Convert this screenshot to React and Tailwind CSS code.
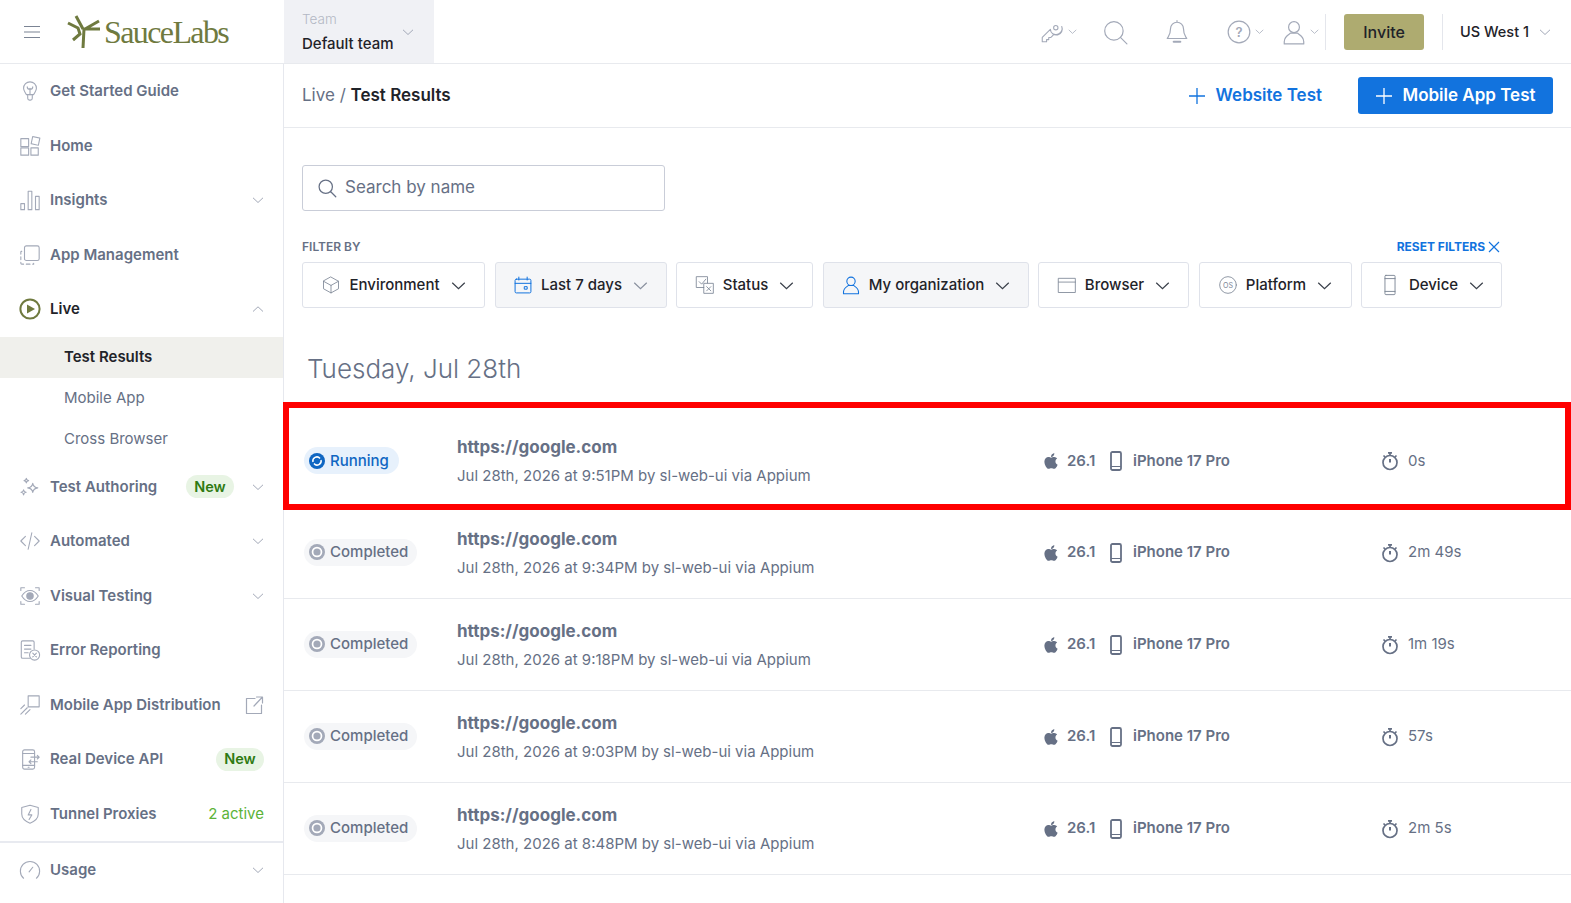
import React from "react";
import { FaApple } from "react-icons/fa";

const I = ({ s = 22, c = "#a3a9b8", sw = 1.2, vb = 24, children, cls = "" }) => (
  <svg width={s} height={s} viewBox={`0 0 ${vb} ${vb}`} fill="none" stroke={c} strokeWidth={sw} strokeLinecap="round" strokeLinejoin="round" className={`shrink-0 ${cls}`}>{children}</svg>
);
const Chev = ({ up, s = 12, c = "#a3a9b8", sw = 1 }) => (
  <svg width={s} height={s} viewBox="0 0 12 12" fill="none" stroke={c} strokeWidth={sw} className="shrink-0"><path d={up ? "M1 8.5 6 3.8l5 4.7" : "M1 3.8 6 8.5l5-4.7"} /></svg>
);
const icons = {
  bulb: <><path d="M12 2a7 7 0 0 0-7 7c0 3 2 4.500 3 7h8c1-2.500 3-4 3-7a7 7 0 0 0-7-7Z"/><path d="M9.500 16v4a2 2 0 0 0 2 2h1a2 2 0 0 0 2-2v-4M12 16V9M9 7.500c0 2 1 2.500 3 2.500s3-.5 3-2.500"/></>,
  home: <><rect x="2" y="4" width="8.500" height="8.500"/><rect x="2" y="14" width="8.500" height="8"/><rect x="13" y="14" width="8" height="8"/><rect x="14" y="2.500" width="8" height="8" transform="rotate(12 18 6.500)"/></>,
  bars: <><rect x="2" y="16" width="4" height="6.500"/><rect x="10" y="2.500" width="4" height="20"/><rect x="18" y="8" width="4" height="14.500"/></>,
  app: <><rect x="6" y="2" width="16" height="16" rx="2"/><path d="M3 8h-.5A1 1 0 0 0 2 9v2m0 3v3m0 3v1a1 1 0 0 0 1 1h2m3 0h4m3 0h1v-1" strokeDasharray="none"/></>,
  spark: <><path d="M15 8c.5 3 2 4.500 5.500 5-3.500.5-5 2-5.500 5-.5-3-2-4.500-5.500-5 3.500-.5 5-2 5.500-5Z"/><path d="M8 2.500c.2 1.500 1 2.300 2.500 2.500C9 5.200 8.200 6 8 7.500 7.800 6 7 5.200 5.500 5 7 4.800 7.800 4 8 2.500ZM5 15c.2 1.800 1 2.600 2.800 2.800C6 18 5.200 18.800 5 20.600 4.800 18.800 4 18 2.200 17.800 4 17.600 4.800 16.800 5 15Z"/></>,
  code: <><path d="M7 7 2 12l5 5M17 7l5 5-5 5M14 3l-4 18"/></>,
  eye: <><path d="M2 6V3h4M18 3h4v3M22 18v3h-4M6 21H2v-3"/><path d="M3 12c2.500-4 5.500-6 9-6s6.500 2 9 6c-2.500 4-5.500 6-9 6s-6.500-2-9-6Z"/><circle cx="12" cy="12" r="3.500" fill="#a3a9b8"/></>,
  err: <><path d="M12 21H4a1.500 1.500 0 0 1-1.500-1.500v-16A1.500 1.500 0 0 1 4 2h11a1.500 1.500 0 0 1 1.500 1.500V11"/><path d="M6 7h7M6 11h7M6 15h4"/><circle cx="17" cy="17.500" r="5.500"/><path d="m15 15.500 4 4m0-4-4 4"/></>,
  dist: <><rect x="10" y="2" width="12" height="12"/><path d="m2 22 7-7M7 22l5-5M2 16l4-4"/></>,
  api: <><rect x="4" y="2" width="13" height="21" rx="2"/><path d="M4 6h13M4 19h13M10 21h1M13 10h9m-2-2 2 2-2 2M20 15h-9m2-2-2 2 2 2"/></>,
  shield: <><path d="M12 2.500 21 5v7c0 5-4 8-9 10-5-2-9-5-9-10V5l9-2.500Z"/><path d="m13 7-3 6h4l-3 5" /></>,
  gauge: <><path d="M5 21a10.500 10.500 0 1 1 14 0"/><path d="m11 14 4-5"/></>,
};

const Row = ({ icon, label, chev, extra, live }) => (
  <div className="h-[54.5px] flex items-center pl-[19px] pr-[19px]">
    {live ? (
      <svg width="22" height="22" viewBox="0 0 22 22" className="shrink-0"><circle cx="11" cy="11" r="9.600" fill="none" stroke="#6f7a3f" strokeWidth="2"/><path d="M8 6.500 16 11l-8 4.500Z" fill="#6f7a3f"/></svg>
    ) : <I c="#a3a9b8">{icons[icon]}</I>}
    <span className={`ml-[9px] text-[15px] font-semibold ${live ? "text-[#1f2329]" : "text-[#667085]"}`}>{label}</span>
    <span className="flex-1" />
    {extra}
    {chev && <span className="ml-[18px]"><Chev up={chev === "up"} /></span>}
  </div>
);
const New = () => <span className="h-[23px] w-[48px] flex items-center justify-center rounded-full bg-[#e8f4e4] text-[#2f7a12] text-[14.500px] font-semibold">New</span>;
const Sub = ({ label, active }) => (
  <div className={`h-[41px] flex items-center pl-[64px] text-[15px] ${active ? "bg-[#f0f0ec] text-[#1f2329] font-semibold" : "text-[#667085]"}`}>{label}</div>
);

const Sidebar = () => (
  <aside className="w-[284px] shrink-0 border-r border-[#e6e8ee] h-full overflow-hidden">
    <Row icon="bulb" label="Get Started Guide" />
    <Row icon="home" label="Home" />
    <Row icon="bars" label="Insights" chev="down" />
    <Row icon="app" label="App Management" />
    <Row live label="Live" chev="up" />
    <Sub label="Test Results" active />
    <Sub label="Mobile App" />
    <Sub label="Cross Browser" />
    <Row icon="spark" label="Test Authoring" chev="down" extra={<New />} />
    <Row icon="code" label="Automated" chev="down" />
    <Row icon="eye" label="Visual Testing" chev="down" />
    <Row icon="err" label="Error Reporting" />
    <Row icon="dist" label="Mobile App Distribution" extra={
      <I s={20} sw={1.200} vb={20}><path d="M11 3.500H2.500v15h15V10M10 11 18 2.500M12.500 2h6v6"/></I>
    } />
    <Row icon="api" label="Real Device API" extra={<New />} />
    <Row icon="shield" label="Tunnel Proxies" extra={<span className="text-[15px] text-[#5cb338]">2 active</span>} />
    <div className="border-t-2 border-[#e8eaf0] h-[56px] flex items-center pl-[19px] pr-[19px]">
      <I>{icons.gauge}</I>
      <span className="ml-[9px] text-[15px] font-semibold text-[#667085]">Usage</span>
      <span className="flex-1" />
      <Chev />
    </div>
  </aside>
);

const TopBar = () => (
  <header className="h-[64px] border-b border-[#e8eaee] flex items-center shrink-0">
    <div className="w-[284px] flex items-center pl-[23px] shrink-0">
      <svg width="18" height="14" viewBox="0 0 18 14" stroke="#7b8494" strokeWidth="1.200" className="shrink-0"><path d="M1 1.500h16M1 7h16M1 12.500h16"/></svg>
      <svg width="36" height="36" viewBox="0 0 36 36" fill="none" stroke="#6f7a3f" strokeWidth="3" className="ml-[25px] shrink-0"><path d="M10 2l7 13M33 7 19 15M34 15H18L17 34M2 9l10 5 2 6-7 6"/></svg>
      <span className="ml-[2px] text-[32px] tracking-[-1.600px] text-[#6f7a3f] font-['Liberation_Serif',serif]">SauceLabs</span>
    </div>
    <div className="w-[150px] h-full bg-[#f0f1f5] pl-[18px] pr-[20px] flex items-center justify-between shrink-0">
      <div className="flex flex-col">
        <span className="text-[13.500px] font-light text-[#b3b8c4] leading-[18px]">Team</span>
        <span className="text-[15px] font-medium text-[#1f2329] mt-[6px] leading-[20px]">Default team</span>
      </div>
      <Chev />
    </div>
    <div className="flex-1" />
    <div className="flex items-center pr-[20px]">
      <I s={26} sw={1}><path d="M21 7a5.500 5.500 0 1 1-10.500 2.500L3 17v4h4v-2h2v-2h2l3-3A5.500 5.500 0 0 0 21 7Z"/><circle cx="15.500" cy="8" r="2"/></I>
      <span className="ml-[3px]"><Chev s={9} /></span>
      <span className="ml-[25px]"><I s={26} sw={1.100}><circle cx="11" cy="11" r="8.500"/><path d="m17 17 6 6"/></I></span>
      <span className="ml-[36px]"><I s={26} sw={1.100}><path d="M12 3a6 6 0 0 0-6 6c0 6-2 7-3 9h18c-1-2-3-3-3-9a6 6 0 0 0-6-6ZM12 1.500V3"/><path d="M9 21h6" strokeWidth="2"/></I></span>
      <span className="ml-[36px]"><I s={26} sw={1.100}><circle cx="12" cy="12" r="10"/><text x="12" y="16.500" fontSize="12" fill="#a3a9b8" stroke="none" textAnchor="middle" fontFamily="Inter" fontWeight="600">?</text></I></span>
      <span className="ml-[3px]"><Chev s={9} /></span>
      <span className="ml-[17px]"><I s={26} sw={1.100}><circle cx="12" cy="7.500" r="5"/><path d="M3 23v-2c0-5 4-6.500 6-8h6c2 1.500 6 3 6 8v2Z"/></I></span>
      <span className="ml-[3px]"><Chev s={9} /></span>
      <span className="ml-[6px] w-px h-[36px] bg-[#e4e6ec]" />
      <span className="ml-[18px] w-[80px] h-[36px] rounded-[3px] bg-[#aeab70] flex items-center justify-center text-[16px] font-medium text-[#1f2329]">Invite</span>
      <span className="ml-[18px] w-px h-[36px] bg-[#e4e6ec]" />
      <span className="ml-[17px] text-[14.500px] font-medium text-[#1f2329]">US West 1</span>
      <span className="ml-[10px]"><Chev /></span>
    </div>
  </header>
);

const Plus = ({ c }) => <svg width="18" height="18" viewBox="0 0 18 18" stroke={c} strokeWidth="1.300" className="shrink-0"><path d="M9 1v16M1 9h16"/></svg>;

const filterIcons = {
  env: <I s={20} c="#7b8494" sw={1}><path d="M12 2.500 21 7.500v9L12 21.500 3 16.500v-9ZM3 7.500l9 5 9-5M12 12.500v9"/></I>,
  date: <I s={20} c="#1273de" sw={1.200}><rect x="2.500" y="5" width="19" height="16.500" rx="1.500"/><path d="M2.500 10h19M7 2.500V6M17 2.500V6"/><rect x="14" y="14" width="3" height="3"/></I>,
  status: <I s={20} c="#7b8494" sw={1}><rect x="2" y="2" width="13" height="13"/><path d="m5 8 3 3 5-6"/><rect x="11" y="10" width="11" height="12" fill="#fff"/><path d="m14 14 5 5m0-5-5 5"/></I>,
  org: <I s={20} c="#1273de" sw={1.300}><circle cx="12" cy="7.500" r="5"/><path d="M3 22.500v-2c0-5 4-6.500 6-8h6c2 1.500 6 3 6 8v2Z"/></I>,
  browser: <I s={20} c="#7b8494" sw={1}><rect x="2" y="4" width="20" height="17"/><path d="M2 8.500h20"/></I>,
  os: <I s={20} c="#7b8494" sw={1}><circle cx="12" cy="12" r="10"/><text x="12" y="15" fontSize="8.500" fill="#7b8494" stroke="none" textAnchor="middle" fontFamily="Inter">OS</text></I>,
  device: <I s={22} c="#7b8494" sw={1}><rect x="6.500" y="1.500" width="11" height="21" rx="1"/><path d="M6.500 5h11M6.500 19h11"/></I>,
};

const Filter = ({ icon, label, w, active, gap = "ml-[8px]" }) => (
  <div className={`${w} h-[46px] rounded-[3px] border border-[#dfe2ea] flex items-center justify-center shrink-0 ${active ? "bg-[#f5f6f8]" : "bg-white"}`}>
    {filterIcons[icon]}
    <span className={`${gap} text-[15px] font-medium text-[#1f2329]`}>{label}</span>
    <span className="ml-[11px]"><Chev s={15} c={label === "Last 7 days" ? "#8a919f" : "#3a404a"} /></span>
  </div>
);

const Stop = () => (
  <svg width="20" height="20" viewBox="0 0 20 20" fill="none" stroke="#667085" strokeWidth="1.700" className="shrink-0"><circle cx="10" cy="11.500" r="7"/><path d="M8 1.800h4M10 2v2.500M16.500 4.500l-1.500 1.500M3.500 4.500 5 6"/><path d="M10 8v3.500" strokeWidth="2"/></svg>
);

const TestRow = ({ running, date, dur, border = true }) => (
  <div className={`h-[92px] flex items-center shrink-0 ${border ? "border-b border-[#e8eaee]" : ""}`}>
    <div className="w-[173px] pl-[20px] shrink-0">
      {running ? (
        <span className="inline-flex items-center h-[27px] w-[95px] pl-[5px] rounded-full bg-[#e7f1fc]">
          <svg width="16" height="16" viewBox="0 0 16 16" className="shrink-0"><circle cx="8" cy="8" r="8" fill="#0f66c2"/><path d="M4 9a4 4 0 0 1 7-3.500M12 7a4 4 0 0 1-7 3.500" fill="none" stroke="#fff" strokeWidth="1.500"/></svg>
          <span className="ml-[5px] text-[15px] font-medium text-[#0f66c2]">Running</span>
        </span>
      ) : (
        <span className="inline-flex items-center h-[27px] w-[113px] pl-[5px] rounded-full bg-[#f5f6f8]">
          <svg width="16" height="16" viewBox="0 0 16 16" className="shrink-0"><circle cx="8" cy="8" r="8" fill="#a3a9b8"/><circle cx="8" cy="8" r="5.300" fill="#fff"/><circle cx="8" cy="8" r="3.600" fill="#a3a9b8"/></svg>
          <span className="ml-[5px] text-[15px] font-medium text-[#667085]">Completed</span>
        </span>
      )}
    </div>
    <div className="w-[585px] shrink-0 flex flex-col">
      <span className="text-[17px] font-bold text-[#667085] leading-[22px]">https://google.com</span>
      <span className="text-[15px] text-[#667085] leading-[20px] mt-[8px]">{date}</span>
    </div>
    <div className="flex items-center w-[338px] shrink-0 text-[#667085]">
      <FaApple size={18} color="#667085" className="shrink-0" />
      <span className="ml-[7px] text-[15px] font-semibold w-[41px]">26.1</span>
      <svg width="16" height="20" viewBox="0 0 16 20" fill="none" stroke="#667085" strokeWidth="1.800" className="shrink-0"><rect x="3" y="1" width="10" height="18" rx="1.500"/><path d="M3 15.500h10" strokeWidth="1"/></svg>
      <span className="ml-[9px] text-[15px] font-semibold">iPhone 17 Pro</span>
    </div>
    <div className="flex items-center text-[15px] text-[#667085]">
      <Stop />
      <span className="ml-[8px]">{dur}</span>
    </div>
  </div>
);

export default function App() {
  return (
    <div className="h-[903px] w-[1571px] overflow-hidden flex flex-col bg-white font-['Inter',sans-serif] relative">
      <TopBar />
      <div className="flex flex-1 min-h-0">
        <Sidebar />
        <main className="flex-1 min-w-0 flex flex-col">
          <div className="h-[64px] shrink-0 border-b border-[#e8eaee] flex items-center pl-[18px] pr-[18px]">
            <span className="text-[17px] text-[#667085]">Live /&nbsp;</span>
            <span className="text-[17px] font-semibold text-[#1f2329]">Test Results</span>
            <span className="flex-1" />
            <Plus c="#1273de" />
            <span className="ml-[10px] text-[17px] font-semibold text-[#1273de]">Website Test</span>
            <span className="ml-[36px] w-[195px] h-[37px] rounded-[3px] bg-[#1273de] flex items-center justify-center text-white text-[17px] font-semibold">
              <Plus c="#fff" /><span className="ml-[9px]">Mobile App Test</span>
            </span>
          </div>
          <div className="pl-[18px] pr-[71px] pt-[37px]">
            <div className="w-[363px] h-[46px] rounded-[3px] border border-[#c9cdd8] flex items-center pl-[14px]">
              <I s={20} c="#667085" sw={1.500}><circle cx="10.500" cy="10.500" r="8"/><path d="m16.500 16.500 6 6"/></I>
              <span className="ml-[8px] text-[17px] text-[#667085]">Search by name</span>
            </div>
            <div className="mt-[27px] flex justify-between items-center h-[18px]">
              <span className="text-[12px] font-semibold text-[#667085]">FILTER BY</span>
              <span className="flex items-center text-[12px] font-bold text-[#1273de]">RESET FILTERS
                <svg width="12" height="12" viewBox="0 0 12 12" stroke="#1273de" strokeWidth="1.200" className="ml-[3px]"><path d="m1 1 10 10M11 1 1 11"/></svg>
              </span>
            </div>
            <div className="mt-[6px] flex gap-[9.500px]">
              <Filter icon="env" label="Environment" w="w-[183px]" />
              <Filter icon="date" label="Last 7 days" w="w-[172px]" active />
              <Filter icon="status" label="Status" w="w-[137px]" />
              <Filter icon="org" label="My organization" w="w-[206px]" active />
              <Filter icon="browser" label="Browser" w="w-[151px]" />
              <Filter icon="os" label="Platform" w="w-[153px]" />
              <Filter icon="device" label="Device" w="w-[141px]" />
            </div>
          </div>
          <h2 className="mt-[43px] ml-[23px] text-[26px] font-light text-[#667085] leading-[36px]">Tuesday, Jul 28th</h2>
          <div className="mt-[28px] flex flex-col">
            <TestRow running date="Jul 28th, 2026 at 9:51PM by sl-web-ui via Appium" dur="0s" border={false} />
            <TestRow date="Jul 28th, 2026 at 9:34PM by sl-web-ui via Appium" dur="2m 49s" />
            <TestRow date="Jul 28th, 2026 at 9:18PM by sl-web-ui via Appium" dur="1m 19s" />
            <TestRow date="Jul 28th, 2026 at 9:03PM by sl-web-ui via Appium" dur="57s" />
            <TestRow date="Jul 28th, 2026 at 8:48PM by sl-web-ui via Appium" dur="2m 5s" />
            <TestRow date="" dur="" />
          </div>
        </main>
      </div>
      <div className="absolute left-[283px] top-[402px] w-[1288px] h-[108px] border-[6px] border-[#ff0000] pointer-events-none" />
    </div>
  );
}
